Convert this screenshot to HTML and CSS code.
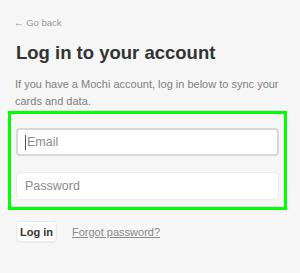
FILE: index.html
```html
<!DOCTYPE html>
<html>
<head>
<meta charset="utf-8">
<link rel="stylesheet" href="styles.css">
</head>
<body>
<div class="page">
  <a class="back" href="#">← Go back</a>
  <h1 class="title">Log in to your account</h1>
  <p class="intro">If you have a Mochi account, log in below to sync your cards and data.</p>
  <div class="form-box">
    <div class="field focused"><span class="caret"></span><span class="ph">Email</span></div>
    <div class="field"><span class="ph">Password</span></div>
  </div>
  <div class="actions">
    <button class="btn">Log in</button>
    <a class="forgot" href="#">Forgot password?</a>
  </div>
</div>
</body>
</html>
```
FILE: styles.css
```css
html, body {
  margin: 0;
  padding: 0;
  background: #f6f6f6;
}
body {
  font-family: "Liberation Sans", Arial, sans-serif;
  width: 300px;
  height: 273px;
  overflow: hidden;
}
.page {
  padding: 17px 10px 0 16px;
}
.back {
  display: block;
  margin-left: -2px;
  font-size: 9.5px;
  line-height: 12px;
  color: #9a9a9a;
  text-decoration: none;
}
.title {
  margin: 13px 0 0;
  font-size: 18.5px;
  line-height: 22px;
  font-weight: bold;
  color: #333;
}
.intro {
  margin: 12px 0 0 -1px;
  font-size: 11px;
  line-height: 17px;
  color: #808080;
}
.form-box {
  margin: 1px 0 0 -8px;
  width: 263px;
  border: 3px solid #00ff00;
  padding: 14px 5px 7px;
}
.field {
  box-sizing: border-box;
  height: 28px;
  background: #fff;
  border: 1px solid #e6e6e6;
  border-radius: 4px;
  display: flex;
  align-items: center;
  padding-left: 8px;
  font-size: 12.5px;
  color: #8a8a8a;
}
.field + .field {
  margin-top: 16px;
  border-color: #ececec;
}
.field.focused {
  border: 2px solid #d8d8d8;
  padding-left: 7px;
}
.caret {
  width: 1px;
  height: 15px;
  background: #555;
  margin-right: 1px;
}
.actions {
  display: flex;
  align-items: center;
  margin-top: 11px;
  gap: 15px;
}
.btn {
  box-sizing: border-box;
  height: 21px;
  padding: 0 3px;
  background: #fff;
  border: 1px solid #e8e8e8;
  border-radius: 4px;
  box-shadow: 0 1px 1px rgba(0, 0, 0, 0.04);
  font-family: "Liberation Sans", Arial, sans-serif;
  font-size: 11px;
  font-weight: bold;
  color: #333;
}
.forgot {
  font-size: 11px;
  color: #8a8a8a;
  text-decoration: underline;
}
```
